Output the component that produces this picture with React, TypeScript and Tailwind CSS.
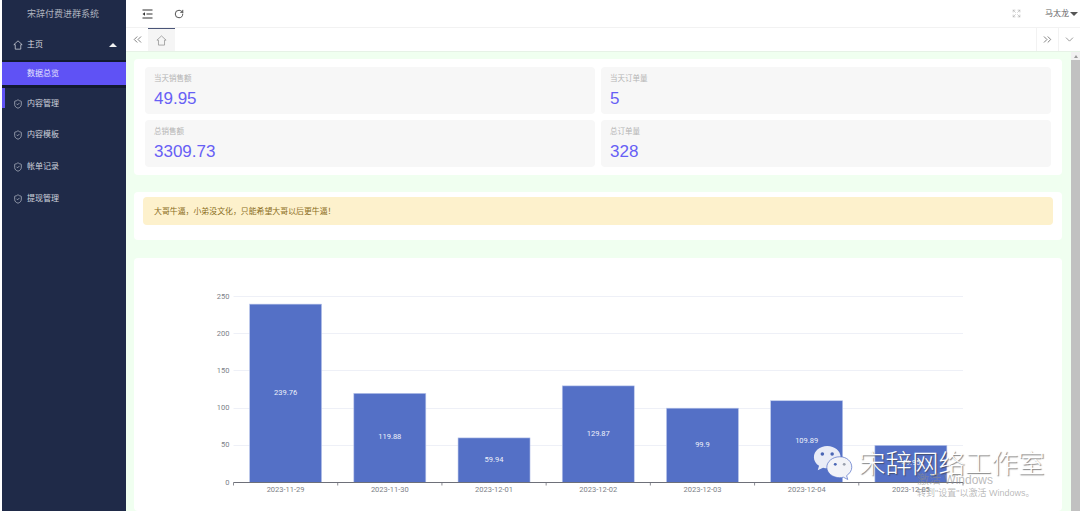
import React from "react";
import { RotateCw, ChevronsLeft, ChevronsRight, ChevronDown, ShieldCheck, Expand } from "lucide-react";

const font = { fontFamily: '"Liberation Sans", "Noto Sans CJK SC", sans-serif' };

const bars = [
  { d: "2023-11-29", v: 239.76, l: "239.76" },
  { d: "2023-11-30", v: 119.88, l: "119.88" },
  { d: "2023-12-01", v: 59.94, l: "59.94" },
  { d: "2023-12-02", v: 129.87, l: "129.87" },
  { d: "2023-12-03", v: 99.9, l: "99.9" },
  { d: "2023-12-04", v: 109.89, l: "109.89" },
  { d: "2023-12-05", v: 49.95, l: "49.95" },
];

function House({ size, className }: { size: number; className?: string }) {
  return (
    <svg width={size} height={size} viewBox="0 0 12 12" fill="none" stroke="currentColor" strokeWidth="0.9" className={className}>
      <path d="M6 1 L11 5.600 H9.300 V11 H2.700 V5.600 H1 Z" strokeLinejoin="round" />
    </svg>
  );
}

function Outdent() {
  return (
    <svg width="11" height="10" viewBox="0 0 11 10" className="text-[#333]">
      <path d="M0.500 1 H10.500 M4.500 5 H10.500 M0.500 9 H10.500" stroke="currentColor" strokeWidth="1.1" fill="none" />
      <path d="M0.500 5 L3 3.300 V6.700 Z" fill="currentColor" />
    </svg>
  );
}

function Chart() {
  // viewBox coordinates follow the card's own origin (page x-134, page y-258)
  const x0 = 99.5;
  const x1 = 829;
  const y0 = 224.5;
  const unit = 186 / 250;
  const step = (x1 - x0) / 7;
  const bw = 72;
  const tickFont = "Roboto, sans-serif";
  return (
    <svg width="928" height="253" viewBox="0 0 928 253" className="block">
      {[50, 100, 150, 200, 250].map((t) => {
        const y = Math.floor(y0 - t * unit) + 0.5;
        return <line key={t} x1={x0} x2={x1} y1={y} y2={y} stroke="#eef0f7" strokeWidth="1" />;
      })}
      {[0, 50, 100, 150, 200, 250].map((t) => (
        <text key={t} x="95.5" y={y0 - t * unit + 2} textAnchor="end" fontSize="7.5" fill="#7d7f87" fontFamily={tickFont}>
          {t}
        </text>
      ))}
      {bars.map((b, i) => {
        const cx = x0 + step * (i + 0.5);
        const h = b.v * unit;
        return (
          <g key={b.d}>
            <rect x={cx - bw / 2} y={y0 - h} width={bw} height={h} fill="#5470c6" stroke="#bcc8ec" strokeWidth="0.6" />
            <text x={cx} y={y0 - h / 2 + 1.5} textAnchor="middle" fontSize="7.5" fill="#eef1fa" fontFamily={tickFont}>
              {b.l}
            </text>
            <text x={cx} y={y0 + 9.5} textAnchor="middle" fontSize="7.5" fill="#7d7f87" fontFamily={tickFont}>
              {b.d}
            </text>
          </g>
        );
      })}
      <line x1={x0} x2={x1} y1={y0} y2={y0} stroke="#6e7079" strokeWidth="1" />
      {Array.from({ length: 8 }).map((_, i) => (
        <line key={i} x1={x0 + step * i} x2={x0 + step * i} y1={y0} y2={y0 + 3} stroke="#6e7079" strokeWidth="0.8" />
      ))}
    </svg>
  );
}

function Tile({ label, value }: { label: string; value: string }) {
  return (
    <div className="h-[47px] bg-[#f7f7f7] rounded-sm pl-[9px] pt-[7px]">
      <div className="text-[7.5px] leading-[10px] text-[#b4b4b4]">{label}</div>
      <div className="text-[17px] leading-[21px] mt-[4px] text-[#675ff5]">{value}</div>
    </div>
  );
}

function MenuItem({ label }: { label: string }) {
  return (
    <div className="h-[31.5px] flex items-center pl-[11px] text-[#cfd3dc] text-[8px] gap-[4px] shrink-0">
      <ShieldCheck size={10} strokeWidth={1.6} className="text-[#c6cad3]" />
      <span>{label}</span>
    </div>
  );
}

function WeChat() {
  return (
    <svg width="41" height="36" viewBox="0 0 46 40" className="block">
      <path d="M16 1C7.5 1 1 6.700 1 13.500c0 4 2.200 7.300 5.800 9.700l-1.500 5 6-3c1.600.4 3 .7 4.700.7 9 0 15-6 15-12.400C31 6.700 24.500 1 16 1z" fill="#e9ecf7" />
      <circle cx="10.500" cy="10" r="2" fill="#4a66b5" />
      <circle cx="21.500" cy="10" r="2" fill="#4a66b5" />
      <path d="M30 13c-8 0-14.500 5.300-14.500 11.800S22 36.500 30 36.500c1.400 0 2.700-.2 4-.6l5 2.600-1.300-4.300c3.500-2.300 5.800-5.800 5.800-9.400C43.500 18.300 38 13 30 13z" fill="#f2f3f8" stroke="#5470c6" strokeWidth="0.8" />
      <circle cx="25" cy="21.500" r="1.600" fill="#4a66b5" />
      <circle cx="35" cy="21.500" r="1.600" fill="#9aa0ad" />
    </svg>
  );
}

export default function App() {
  return (
    <div className="relative w-[1080px] h-[511px] flex overflow-hidden bg-white" style={font}>
      <aside className="ml-[2px] w-[124px] shrink-0 h-full bg-[#1f2a48] flex flex-col">
        <div className="h-[28px] flex items-center pt-[1px] pl-[25px] text-[9px] text-[#aeb3bf] shrink-0">宋辞付费进群系统</div>
        <div className="h-[32px] flex items-center pt-[1px] pl-[11px] pr-[9px] text-[8px] text-[#d5d8df] gap-[4px] shrink-0">
          <House size={10} />
          <span className="flex-1">主页</span>
          <span className="w-0 h-0 border-x-[4px] border-x-transparent border-b-[4px] border-b-[#f2f2f2]" />
        </div>
        <div className="h-[28px] bg-[#121a30] py-[2px] shrink-0">
          <div className="h-[23px] bg-[#5f52f5] flex items-center pl-[25px] text-[8px] text-[#e6e4fd]">数据总览</div>
        </div>
        <div className="relative">
          <span className="absolute left-0 top-0 w-[3px] h-[20px] bg-[#5f52f5]" />
          <MenuItem label="内容管理" />
        </div>
        <MenuItem label="内容模板" />
        <MenuItem label="帐单记录" />
        <div className="pt-[1px]">
          <MenuItem label="提现管理" />
        </div>
      </aside>

      <div className="flex-1 min-w-0 flex flex-col h-full">
        <header className="h-[28px] shrink-0 flex items-center border-b border-[#f2f2f2] pl-[16px] pr-[2px]">
          <Outdent />
          <RotateCw size={10} strokeWidth={2} className="text-[#333] ml-[21px]" />
          <div className="flex-1" />
          <Expand size={9} strokeWidth={1.5} className="text-[#aaa]" />
          <span className="ml-[23px] text-[8px] text-[#666] translate-x-[1px]">马太龙</span>
          <span className="ml-[2px] w-0 h-0 border-x-[4px] border-x-transparent border-t-[4px] border-t-[#555]" />
        </header>
        <nav className="h-[23px] shrink-0 flex items-stretch bg-white">
          <div className="w-[22px] flex items-center justify-center text-[#666]">
            <ChevronsLeft size={13} strokeWidth={1.5} />
          </div>
          <div className="w-[27px] bg-[#f5f5f5] border-t border-[#4a5578] flex items-center justify-center text-[#999]">
            <House size={11} />
          </div>
          <div className="flex-1" />
          <div className="w-[22px] border-l border-[#f2f2f2] flex items-center justify-center text-[#666]">
            <ChevronsRight size={13} strokeWidth={1.5} />
          </div>
          <div className="w-[22px] border-l border-[#f2f2f2] flex items-center justify-center text-[#666]">
            <ChevronDown size={13} strokeWidth={1.2} />
          </div>
        </nav>
        <div className="flex-1 min-h-0 flex bg-[#f0fff0] border-t border-[#e6f2e6]">
          <main className="flex-1 min-w-0 pl-[8px] pr-[8px] pt-[7px] overflow-hidden">
            <section className="h-[116px] bg-white rounded-sm px-[11px] pt-[8px] w-[928px]">
              <div className="grid grid-cols-2 gap-x-[6px] gap-y-[6px]">
                <Tile label="当天销售额" value="49.95" />
                <Tile label="当天订单量" value="5" />
                <Tile label="总销售额" value="3309.73" />
                <Tile label="总订单量" value="328" />
              </div>
            </section>
            <section className="mt-[17px] h-[48px] w-[928px] bg-white rounded-sm px-[9px] pt-[5px]">
              <div className="h-[28px] bg-[#fdf1cc] rounded-sm flex items-center pl-[11px] pt-[1px] text-[7.9px] text-[#8a6d1c]">
                大哥牛逼，小弟没文化，只能希望大哥以后更牛逼！
              </div>
            </section>
            <section className="mt-[18px] w-[928px] bg-white rounded-sm">
              <Chart />
            </section>
          </main>
          <div className="w-[9px] shrink-0 bg-[#f1f1f1] flex flex-col items-center">
            <span className="mt-[3px] w-0 h-0 border-x-[2.500px] border-x-transparent border-b-[3px] border-b-[#9a9a9a]" />
            <div className="mt-[2px] w-full flex-1 bg-[#c1c1c1]" />
          </div>
        </div>
      </div>

      <div className="absolute left-[813px] top-[445px]">
        <WeChat />
      </div>
      <div
        className="absolute left-[859px] top-[447px] text-[26.500px] leading-[34px] font-light text-white whitespace-nowrap"
        style={{ textShadow: "1px 1px 1px rgba(60,60,60,.65)" }}
      >
        宋辞网络工作室
      </div>
      <div className="absolute left-[917px] top-[473px] text-[12px] leading-[14px] text-[#8b8b8b]/60 whitespace-nowrap">激活 Windows</div>
      <div className="absolute left-[917px] top-[488px] text-[9px] leading-[11px] text-[#8b8b8b]/60 whitespace-nowrap">转到"设置"以激活 Windows。</div>
    </div>
  );
}
